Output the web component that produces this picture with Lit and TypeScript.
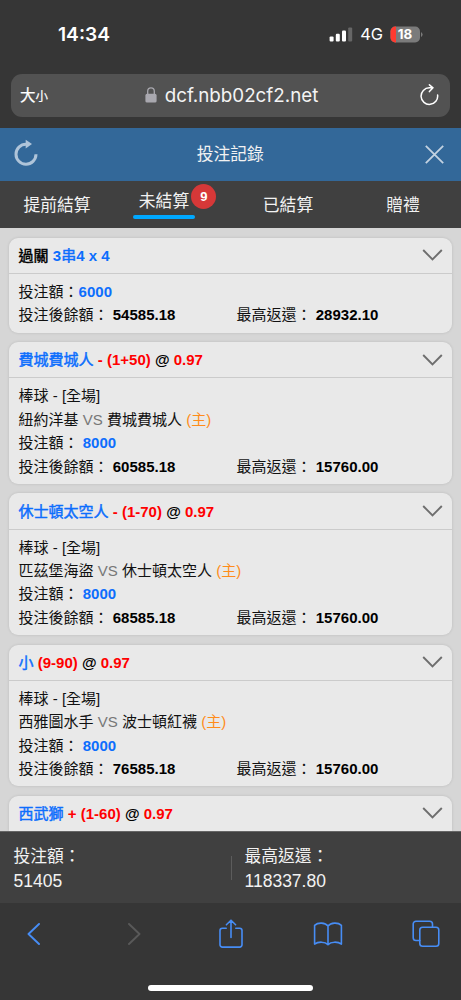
import { LitElement, html, css, svg, nothing } from "lit";
import { customElement, property } from "lit/decorators.js";

interface Bet {
  lead?: string;
  pick: string;
  line?: string;
  odds?: string;
  league?: string;
  away?: string;
  home?: string;
  stake?: string;
  balance?: string;
  payout?: string;
}

const BETS: Bet[] = [
  { lead: "過關", pick: "3串4 x 4", stake: "6000", balance: "54585.18", payout: "28932.10" },
  { pick: "費城費城人", line: "- (1+50)", odds: "0.97", league: "棒球 - [全場]", away: "紐約洋基", home: "費城費城人", stake: "8000", balance: "60585.18", payout: "15760.00" },
  { pick: "休士頓太空人", line: "- (1-70)", odds: "0.97", league: "棒球 - [全場]", away: "匹茲堡海盜", home: "休士頓太空人", stake: "8000", balance: "68585.18", payout: "15760.00" },
  { pick: "小", line: "(9-90)", odds: "0.97", league: "棒球 - [全場]", away: "西雅圖水手", home: "波士頓紅襪", stake: "8000", balance: "76585.18", payout: "15760.00" },
  { pick: "西武獅", line: "+ (1-60)", odds: "0.97" },
];

@customElement("bet-card")
class BetCard extends LitElement {
  @property({ attribute: false }) bet!: Bet;

  static styles = css`
    :host { display: block; flex: none; }
    .card {
      background: #e9e9e9;
      border-radius: 9px;
      box-shadow: 0 0 3px rgba(0, 0, 0, 0.13);
      color: #111;
      font-size: 15px;
      line-height: 23.4px;
      white-space: nowrap;
    }
    .card.open { border-radius: 9px 9px 0 0; }
    .head {
      display: flex;
      justify-content: space-between;
      align-items: center;
      height: 35.4px;
      padding: 0 9px 0 9.3px;
      border-bottom: 1px solid #cbcbcb;
      font-weight: bold;
      color: #000;
    }
    .open .head { border-bottom: none; }
    .name { padding-top: 0.6px; }
    .cjk { font-weight: 400; -webkit-text-stroke: 0.45px currentColor; }
    .blue { color: #0d6efd; }
    .red { color: #f00; }
    .body { padding: 5.9px 9.3px 6.1px; }
    .row { display: flex; height: 23.4px; }
    .row > .half { flex: none; width: 218px; }
    .plain { height: 23.4px; }
    .vs { color: #777; }
    .host { color: #ff8c1a; }
    b { color: #000; }
    b.blue { color: #0d6efd; }
    .chev { display: block; }
  `;

  render() {
    const b = this.bet;
    return html`<div class="card ${b.stake ? "" : "open"}">
      <div class="head">
        <div class="name">${b.lead ? html`<span class="cjk">${b.lead}</span> <span class="blue">3<span class="cjk">串</span>4 x 4</span>` : html`<span class="blue cjk">${b.pick}</span>`}${b.line ? html` <span class="red">${b.line}</span> @ <span class="red">${b.odds}</span>` : nothing}</div>
        <svg class="chev" width="21" height="14" viewBox="0 0 21 14" fill="none" stroke="#6e6e6e" stroke-width="1.9"><path d="M1.2 2L10.5 11.5L19.8 2" /></svg>
      </div>
      ${b.stake
        ? html`<div class="body">
            ${b.league
              ? html`<div class="plain">${b.league}</div>
                  <div class="plain">${b.away} <span class="vs">VS</span> ${b.home} <span class="host">(主)</span></div>`
              : nothing}
            <div class="plain">投注額：${b.league ? " " : ""}<b class="blue">${b.stake}</b></div>
            <div class="row">
              <div class="half">投注後餘額： <b>${b.balance}</b></div>
              <div>最高返還： <b>${b.payout}</b></div>
            </div>
          </div>`
        : nothing}
    </div>`;
  }
}

const stroke = (w: number, h: number, body: unknown, color = "#478df5", sw = 1.6) => html`<svg
  width=${w} height=${h} viewBox="0 0 ${w} ${h}" fill="none" stroke=${color} stroke-width=${sw}
  stroke-linecap="round" stroke-linejoin="round">${body}</svg>`;

@customElement("app-root")
class AppRoot extends LitElement {
  static styles = css`
    :host {
      display: flex;
      flex-direction: column;
      width: 461px;
      height: 1000px;
      overflow: hidden;
      background: #363636;
      font-family: "Liberation Sans", "Noto Sans CJK TC", sans-serif;
      color: #f2f2f2;
    }
    * { box-sizing: border-box; }
    svg { display: block; }
    .status {
      display: flex;
      align-items: center;
      flex: none;
      height: 74px;
      padding: 0 38px 6px 58px;
      font-family: Inter, sans-serif;
      color: #fff;
    }
    .clock { font-size: 19.2px; font-weight: 600; flex: 1; }
    .net { font-size: 16.4px; margin: 0 7px 0 7px; }
    .address {
      display: grid;
      grid-template-columns: 60px 1fr 56px;
      align-items: center;
      flex: none;
      height: 42.5px;
      margin: 0 11px;
      padding: 0 11px 0 9px;
      border-radius: 11px;
      background: #525252;
    }
    .aa { font-size: 15.5px; line-height: 20px; color: #fff; white-space: nowrap; padding-top: 2px; -webkit-text-stroke: 0.2px #fff; }
    .aa small { font-size: 12.5px; }
    .url {
      display: flex;
      justify-content: center;
      align-items: center;
      gap: 8px;
      font: 400 18.8px Inter, sans-serif;
      color: #f4f4f4;
    }
    .reload { justify-self: end; }
    .title {
      display: flex;
      justify-content: space-between;
      align-items: center;
      flex: none;
      height: 53px;
      margin-top: 11.5px;
      padding: 0 17px 3px 13.5px;
      background: #336899;
      font-size: 16.8px;
    }
    .caption { margin-right: 2px; }
    .close { margin-top: 3px; }
    .tabs {
      display: grid;
      grid-template-columns: 114px 100px 148px 82px;
      flex: none;
      height: 47px;
      background: #404040;
      font-size: 16.8px;
      line-height: 24px;
    }
    .tab { display: flex; flex-direction: column; align-items: center; padding-top: 13px; white-space: nowrap; }
    .tab.on { padding-top: 9px; }
    .tab .lbl { position: relative; }
    .bar { width: 62.5px; height: 3.6px; border-radius: 2px; background: #00a8ff; margin-top: 1.2px; }
    .badge {
      position: absolute;
      left: 52.5px;
      top: -6px;
      width: 25px;
      height: 25px;
      border-radius: 50%;
      background: #d63838;
      font-size: 13px;
      font-weight: bold;
      line-height: 25px;
      text-align: center;
      color: #fff;
    }
    .list {
      display: flex;
      flex-direction: column;
      gap: 9.3px;
      height: 603px;
      flex: none;
      overflow: hidden;
      padding: 9.6px 9.3px 0;
      background: #d6d6d6;
    }
    .totals {
      display: flex;
      align-items: center;
      flex: none;
      height: 72px;
      background: #404040;
      border-top: 1px solid #666;
      padding: 3px 0 0 13.5px;
      font-size: 16.8px;
      line-height: 24px;
    }
    .sum { width: 217px; }
    .rule + .sum { padding-left: 13px; }
    .num { font-size: 17.5px; }
    .rule { width: 1px; height: 24px; margin-bottom: 3px; background: #5c5c5c; }
    .nav {
      display: grid;
      grid-template-columns: 68px 131px 63px 132px 63px;
      justify-items: center;
      align-items: center;
      flex: none;
      height: 62px;
    }
    .homebar { width: 165px; height: 6px; border-radius: 3px; background: #fff; margin: 19.5px 0 0 148px; flex: none; }
  `;

  render() {
    return html`
      <div class="status">
        <div class="clock">14:34</div>
        <svg width="24" height="15" viewBox="0 0 24 15" fill="#fff">
          <rect x="0.6" y="9.5" width="4" height="5" rx="1.1" /><rect x="6.8" y="6.8" width="4" height="7.7" rx="1.1" />
          <rect x="13" y="3.6" width="4" height="10.9" rx="1.1" /><rect x="19.2" y="0.5" width="4" height="14" rx="1.1" fill="#666" />
        </svg>
        <div class="net">4G</div>
        <svg width="33" height="17" viewBox="0 0 33 17">
          <rect x="0.5" y="0.5" width="29.5" height="16" rx="4.8" fill="#7b7b7b" />
          <path d="M6 .5H5.3A4.8 4.8 0 0 0 .5 5.3V11.7A4.8 4.8 0 0 0 5.3 16.5H6Z" fill="#ff3b30" />
          <path d="M31 6Q32.6 7 32.6 8.5T31 11Z" fill="#7b7b7b" />
          <text x="15" y="13.3" text-anchor="middle" font-family="Inter" font-size="13.4" font-weight="700" fill="#fff">18</text>
        </svg>
      </div>
      <div class="address">
        <div class="aa">大<small>小</small></div>
        <div class="url">
          <svg width="12" height="16" viewBox="0 0 12 16" fill="none"><rect x="0.4" y="6.8" width="11.2" height="8.8" rx="1.6" fill="#a9a8af" /><path d="M2.7 7V4.2a3.3 3.3 0 0 1 6.6 0V7" stroke="#a9a8af" stroke-width="1.3" /></svg>
          <span>dcf.nbb02cf2.net</span>
        </div>
        <div class="reload">${stroke(20, 22, svg`<path d="M18.6 11A8.3 8.3 0 1 1 10.3 3.8H14M10.4 .8L14 3.8L10.4 7.6" />`, "#fff", 1.5)}</div>
      </div>
      <div class="title">
        <svg width="24" height="28" viewBox="0 0 24 28" fill="none"><path d="M22 15.3A10 10 0 1 1 12 5.2H13" stroke="#afc4d9" stroke-width="3" /><path d="M11.7.8L18 5L11.7 9.6Z" fill="#afc4d9" /></svg>
        <div class="caption">投注記錄</div>
        <svg class="close" width="19" height="19" viewBox="0 0 19 19" stroke="#c3d2e1" stroke-width="1.8"><path d="M.8 .8L18.2 18.2M18.2 .8L.8 18.2" /></svg>
      </div>
      <div class="tabs">
        <div class="tab">提前結算</div>
        <div class="tab on"><div class="lbl">未結算<span class="badge">9</span></div><div class="bar"></div></div>
        <div class="tab">已結算</div>
        <div class="tab">贈禮</div>
      </div>
      <div class="list">${BETS.map((b) => html`<bet-card .bet=${b}></bet-card>`)}</div>
      <div class="totals">
        <div class="sum"><div>投注額：</div><div class="num">51405</div></div>
        <div class="rule"></div>
        <div class="sum"><div>最高返還：</div><div class="num">118337.80</div></div>
      </div>
      <div class="nav">
        ${stroke(14, 22, svg`<path d="M12 1L1.5 11L12 21" />`, "#478df5", 1.9)}
        ${stroke(14, 22, svg`<path d="M2 1L12.5 11L2 21" />`, "#595959", 1.9)}
        ${stroke(26, 30, svg`<path d="M8.2 9.3H4.3A2.3 2.3 0 0 0 2 11.6V25.8A2.3 2.3 0 0 0 4.3 28.1H21.7A2.3 2.3 0 0 0 24 25.8V11.6A2.3 2.3 0 0 0 21.7 9.3H17.8M13 18.5V1.3M8.4 5.8L13 1.2L17.6 5.8" />`)}
        ${stroke(30, 26, svg`<path d="M15 5.1C12.2 1.4 5 1.2 1.6 4.4V23.1C5 20.5 12 20.4 15 23.6C18 20.4 25 20.5 28.4 23.1V4.4C25 1.2 17.8 1.4 15 5.1V23.2" />`)}
        ${stroke(28, 28, svg`<path d="M7.8 20.5H4A2.8 2.8 0 0 1 1.2 17.7V4A2.8 2.8 0 0 1 4 1.2H17.7A2.8 2.8 0 0 1 20.5 4V7.3" /><rect x="7.8" y="7.3" width="19" height="19" rx="2.8" />`)}
      </div>
      <div class="homebar"></div>
    `;
  }
}
